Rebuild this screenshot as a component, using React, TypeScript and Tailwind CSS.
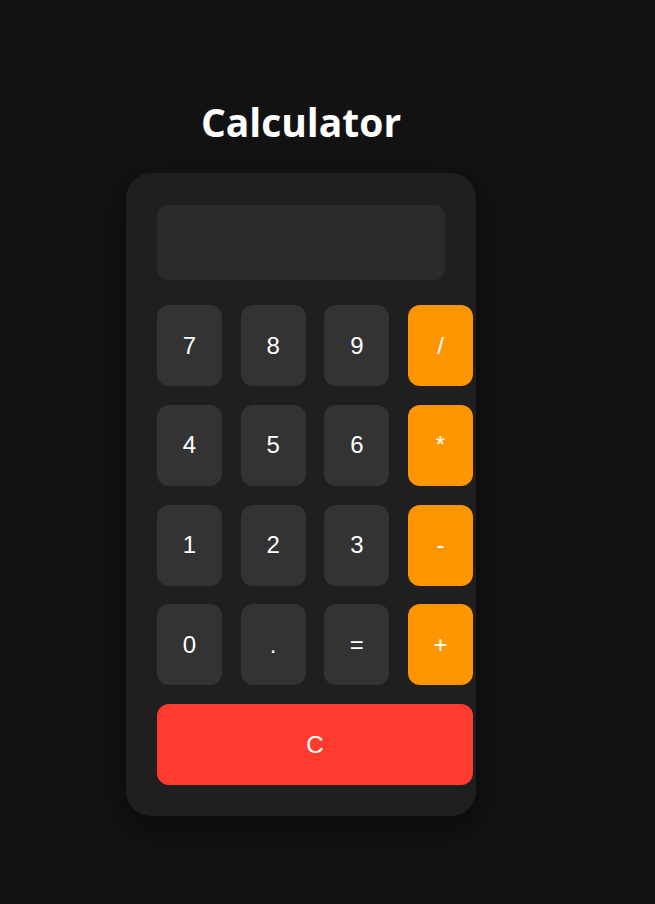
import React from 'react';

const keys: { label: string; op?: boolean }[] = [
  { label: '7' }, { label: '8' }, { label: '9' }, { label: '/', op: true },
  { label: '4' }, { label: '5' }, { label: '6' }, { label: '*', op: true },
  { label: '1' }, { label: '2' }, { label: '3' }, { label: '-', op: true },
  { label: '0' }, { label: '.' }, { label: '=' }, { label: '+', op: true },
];

export default function App() {
  return (
    <div className="min-h-screen bg-[#121212] pt-[96px] pl-[126px]">
      <div className="w-[350px]">
        <h1 className="text-center text-white text-[39px] leading-[52px] font-bold font-['Open_Sans',sans-serif] mb-[25px]">
          Calculator
        </h1>
        <div className="h-[643px] rounded-[25px] bg-[#1f1f1f] pt-[32px] pl-[31px] shadow-[0_10px_30px_rgba(0,0,0,0.45)]">
          <div className="w-[288px] h-[75px] rounded-[10px] bg-[#2b2b2b]" />
          <div className="mt-[25px] w-[316px] grid grid-cols-4 gap-x-[18.67px] gap-y-[18.75px] font-['Liberation_Sans',Arial,sans-serif]">
            {keys.map((k) => (
              <button
                key={k.label}
                className={
                  'h-[81px] rounded-[12px] text-white text-[24px] flex items-center justify-center ' +
                  (k.op ? 'bg-[#ff9500]' : 'bg-[#333333]')
                }
              >
                {k.label}
              </button>
            ))}
            <button className="col-span-4 h-[81px] rounded-[12px] bg-[#ff3b30] text-white text-[24px] flex items-center justify-center">
              C
            </button>
          </div>
        </div>
      </div>
    </div>
  );
}
